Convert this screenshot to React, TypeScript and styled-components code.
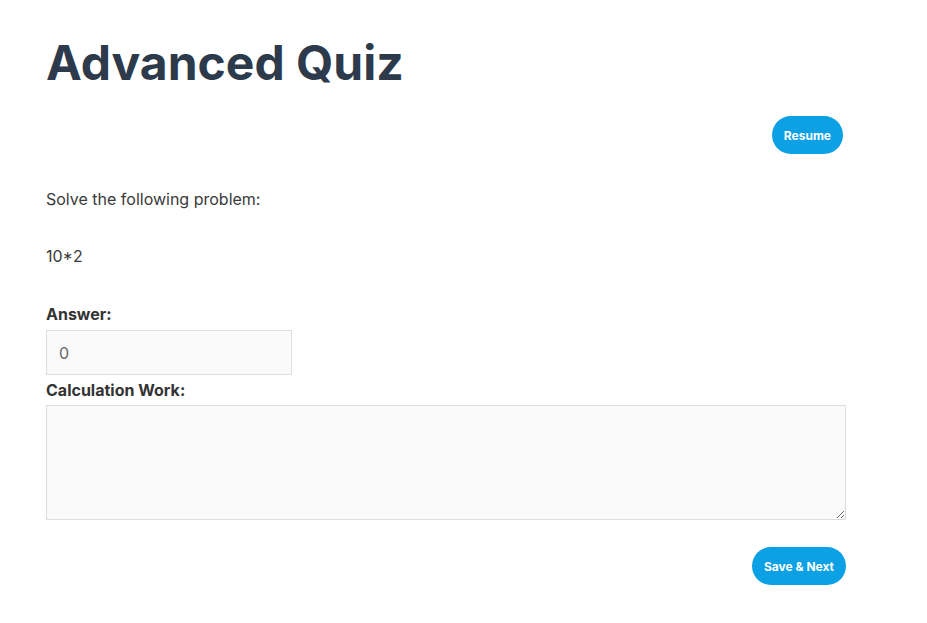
import React from "react";
import styled, { createGlobalStyle } from "styled-components";

const Global = createGlobalStyle`
  html, body { margin: 0; padding: 0; background: #ffffff; }
  body { font-family: Inter, "Noto Sans", sans-serif; color: #333333; }
  * { box-sizing: border-box; }
`;

const Page = styled.main`
  width: 800px;
  margin-left: 46px;
  padding-top: 34px;
  display: flex;
  flex-direction: column;
`;

const Title = styled.h1`
  margin: 0;
  font-size: 48px;
  line-height: 58px;
  font-weight: 700;
  color: #2c3a4b;
`;

const Actions = styled.div<{ $top: number; $pad?: number }>`
  display: flex;
  justify-content: flex-end;
  margin-top: ${(p) => p.$top}px;
  padding-right: ${(p) => p.$pad ?? 0}px;
`;

const Pill = styled.button`
  height: 38px;
  padding: 0 12px;
  border: none;
  border-radius: 19px;
  background: #0ca0e4;
  color: #ffffff;
  font-family: Inter, sans-serif;
  font-size: 12px;
  font-weight: 700;
  cursor: pointer;
`;

const Text = styled.p<{ $top: number }>`
  margin: ${(p) => p.$top}px 0 0;
  font-size: 16px;
  line-height: 24px;
  color: #3a3a3a;
`;

const Field = styled.div<{ $top: number; $gap: number }>`
  display: flex;
  flex-direction: column;
  gap: ${(p) => p.$gap}px;
  margin-top: ${(p) => p.$top}px;
`;

const Label = styled.label`
  display: block;
  font-size: 16px;
  font-weight: 700;
  line-height: 20px;
  color: #333333;
`;

const Input = styled.input`
  width: 246px;
  height: 45px;
  border: 1px solid #dddddd;
  background: #fafafa;
  padding: 0 12px;
  font-family: Inter, sans-serif;
  font-size: 16px;
  color: #666666;
  outline: none;
`;

const Area = styled.textarea`
  width: 800px;
  height: 115px;
  border: 1px solid #dddddd;
  background: #fafafa;
  resize: vertical;
  display: block;
  outline: none;
`;

export default function App() {
  return (
    <>
      <Global />
      <Page>
        <Title>Advanced Quiz</Title>
        <Actions $top={24} $pad={3}>
          <Pill>Resume</Pill>
        </Actions>
        <Text $top={33}>Solve the following problem:</Text>
        <Text $top={33}>10*2</Text>
        <Field $top={36} $gap={6}>
          <Label htmlFor="answer">Answer:</Label>
          <Input id="answer" defaultValue="0" />
        </Field>
        <Field $top={5} $gap={5}>
          <Label htmlFor="work">Calculation Work:</Label>
          <Area id="work" />
        </Field>
        <Actions $top={27}>
          <Pill>Save &amp; Next</Pill>
        </Actions>
      </Page>
    </>
  );
}
